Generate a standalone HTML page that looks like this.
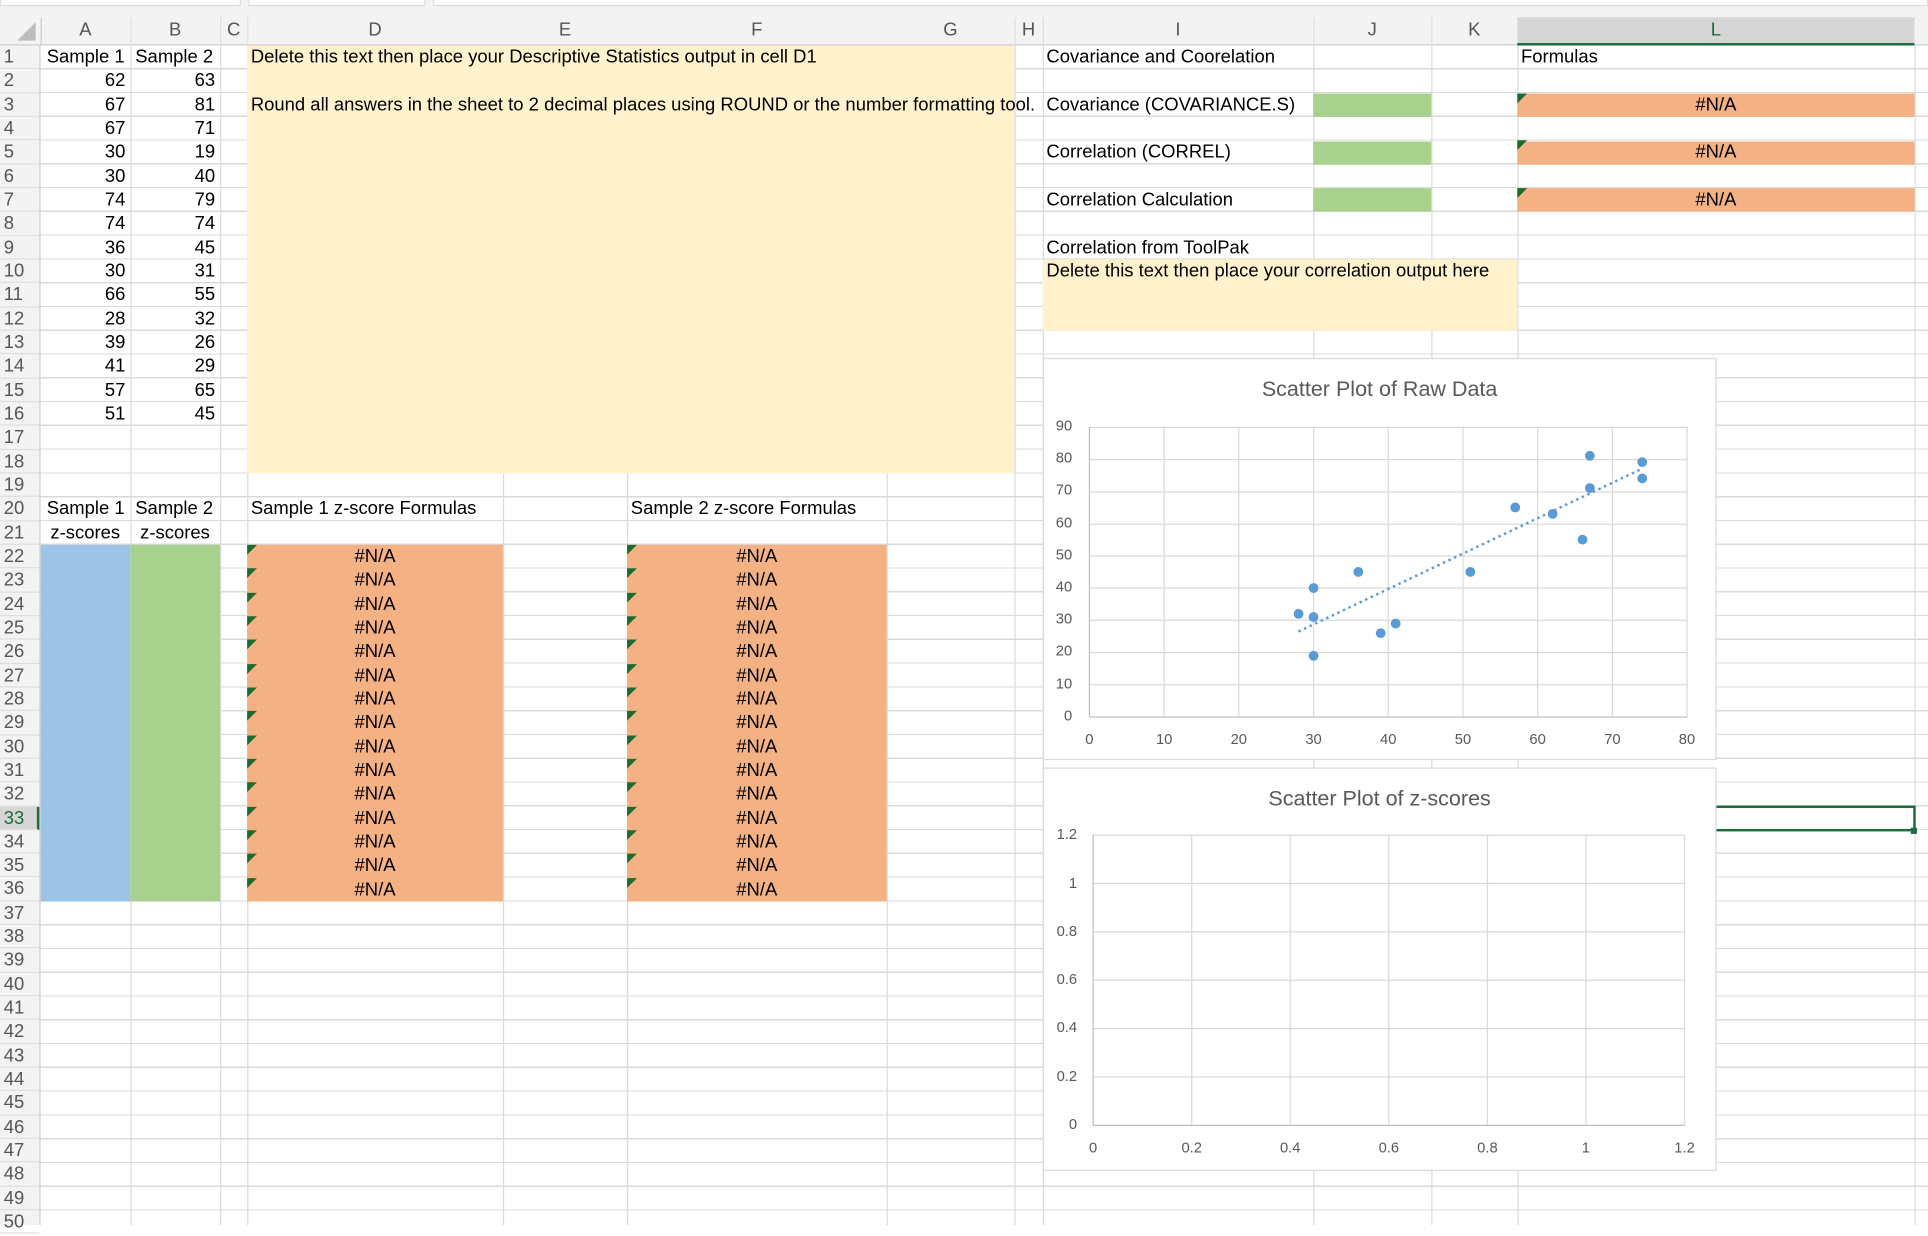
<!DOCTYPE html>
<html><head><meta charset="utf-8">
<style>
*{margin:0;padding:0;box-sizing:border-box}
html,body{width:1928px;height:1225px;overflow:hidden;background:#fff}
#w{position:absolute;left:0;top:0;width:1568px;height:996px;transform:scale(1.22959,1.22992);transform-origin:0 0;font-family:"Liberation Sans",Arial,sans-serif;font-size:15px;color:#000}
.a{position:absolute}
.grid{left:33px;top:37px;width:1535px;height:959px;background:repeating-linear-gradient(to bottom,transparent 0,transparent 18.33px,#dadada 18.33px,#dadada 19.333px)}
.vl{position:absolute;top:14px;width:1px;height:982px;background:#dadada}
.hdr{left:0;top:14px;width:1568px;height:23px;background:#f3f3f3;border-bottom:1px solid #cfcfcf}
.hc{position:absolute;top:14px;height:23px;line-height:22px;text-align:center;color:#555;font-size:15px}
.rn{position:absolute;left:0;top:37px;width:33px;background:#f3f3f3;border-right:1px solid #cfcfcf;height:959px}
.rn div{height:19.333px;line-height:20.5px;padding-left:3px;color:#555;font-size:15px;border-bottom:1px solid #dedede}
.col div{height:19.333px;line-height:20.5px}
.r{text-align:right;padding-right:4px}
.na div{height:19.333px;line-height:20.5px;text-align:center;position:relative}
.na div:before{content:"";position:absolute;left:0;top:0;border-top:8px solid #1e6b2e;border-right:8px solid transparent}
.t{position:absolute;height:19.333px;line-height:20.5px;white-space:nowrap}
</style></head><body><div id="w">
<div class="a" style="left:0;top:0;width:1568px;height:14px;background:#f3f3f3"></div>
<div class="a" style="left:0;top:-4px;width:196px;height:9px;background:#fff;border:1px solid #ddd"></div>
<div class="a" style="left:202px;top:-4px;width:144px;height:9px;background:#fff;border:1px solid #ddd"></div>
<div class="a" style="left:352px;top:-4px;width:1216px;height:9px;background:#fff;border:1px solid #ddd"></div>

<div class="a grid"></div>

<!-- vertical lines -->
<div class="vl" style="left:106px"></div><div class="vl" style="left:179px"></div><div class="vl" style="left:201px"></div>
<div class="vl" style="left:409px;top:385px;height:611px"></div><div class="vl" style="left:510px;top:385px;height:611px"></div>
<div class="vl" style="left:721px;top:385px;height:611px"></div><div class="vl" style="left:825px"></div><div class="vl" style="left:848px"></div>
<div class="vl" style="left:1068px"></div><div class="vl" style="left:1164px"></div><div class="vl" style="left:1234px"></div><div class="vl" style="left:1557px"></div>
<div class="vl" style="left:409px;top:14px;height:23px"></div><div class="vl" style="left:510px;top:14px;height:23px"></div><div class="vl" style="left:721px;top:14px;height:23px"></div>

<!-- fills -->
<div class="a" style="left:201px;top:37px;width:624px;height:348px;background:#fff2cc"></div>
<div class="a" style="left:848px;top:211px;width:386px;height:58px;background:#fff2cc"></div>
<div class="a" style="left:1068px;top:76px;width:96px;height:19px;background:#a9d18e"></div>
<div class="a" style="left:1068px;top:115px;width:96px;height:19px;background:#a9d18e"></div>
<div class="a" style="left:1068px;top:153px;width:96px;height:19px;background:#a9d18e"></div>
<div class="a" style="left:33px;top:443px;width:73px;height:290px;background:#9dc3e6"></div>
<div class="a" style="left:106px;top:443px;width:73px;height:290px;background:#a9d18e"></div>
<div class="a" style="left:201px;top:443px;width:208px;height:290px;background:#f4b183"></div>
<div class="a" style="left:510px;top:443px;width:211px;height:290px;background:#f4b183"></div>
<div class="a" style="left:1234px;top:76px;width:323px;height:19px;background:#f4b183"></div>
<div class="a" style="left:1234px;top:115px;width:323px;height:19px;background:#f4b183"></div>
<div class="a" style="left:1234px;top:153px;width:323px;height:19px;background:#f4b183"></div>

<!-- header -->
<div class="a hdr"></div>
<div class="a" style="left:1234px;top:14px;width:323px;height:23px;background:#d6d6d6;border-bottom:2px solid #1e6b3c"></div>
<div class="a" style="left:14px;top:18px;width:0;height:0;border-bottom:15px solid #bdbdbd;border-left:15px solid transparent"></div>
<div class="hc" style="left:33px;width:73px">A</div><div class="hc" style="left:106px;width:73px">B</div><div class="hc" style="left:179px;width:22px">C</div>
<div class="hc" style="left:201px;width:208px">D</div><div class="hc" style="left:409px;width:101px">E</div><div class="hc" style="left:510px;width:211px">F</div>
<div class="hc" style="left:721px;width:104px">G</div><div class="hc" style="left:825px;width:23px">H</div><div class="hc" style="left:848px;width:220px">I</div>
<div class="hc" style="left:1068px;width:96px">J</div><div class="hc" style="left:1164px;width:70px">K</div><div class="hc" style="left:1234px;width:323px;color:#1e6b3c">L</div>
<div class="vl" style="left:33px;top:14px;height:23px;background:#cfcfcf"></div>
<div class="vl" style="left:106px;top:14px;height:23px;background:#e0e0e0"></div><div class="vl" style="left:179px;top:14px;height:23px;background:#e0e0e0"></div>
<div class="vl" style="left:201px;top:14px;height:23px;background:#e0e0e0"></div><div class="vl" style="left:825px;top:14px;height:23px;background:#e0e0e0"></div>
<div class="vl" style="left:848px;top:14px;height:23px;background:#e0e0e0"></div><div class="vl" style="left:1068px;top:14px;height:23px;background:#e0e0e0"></div>
<div class="vl" style="left:1164px;top:14px;height:23px;background:#e0e0e0"></div>

<div class="rn"><div>1</div><div>2</div><div>3</div><div>4</div><div>5</div><div>6</div><div>7</div><div>8</div><div>9</div><div>10</div><div>11</div><div>12</div><div>13</div><div>14</div><div>15</div><div>16</div><div>17</div><div>18</div><div>19</div><div>20</div><div>21</div><div>22</div><div>23</div><div>24</div><div>25</div><div>26</div><div>27</div><div>28</div><div>29</div><div>30</div><div>31</div><div>32</div><div style="background:#d6d6d6;color:#1e6b3c;border-right:2px solid #1e6b3c">33</div><div>34</div><div>35</div><div>36</div><div>37</div><div>38</div><div>39</div><div>40</div><div>41</div><div>42</div><div>43</div><div>44</div><div>45</div><div>46</div><div>47</div><div>48</div><div>49</div><div>50</div></div>

<div class="t" style="left:38px;top:37px">Sample 1</div><div class="t" style="left:110px;top:37px">Sample 2</div>
<div class="a col r" style="left:33px;top:56.3px;width:73px"><div>62</div><div>67</div><div>67</div><div>30</div><div>30</div><div>74</div><div>74</div><div>36</div><div>30</div><div>66</div><div>28</div><div>39</div><div>41</div><div>57</div><div>51</div></div>
<div class="a col r" style="left:106px;top:56.3px;width:73px"><div>63</div><div>81</div><div>71</div><div>19</div><div>40</div><div>79</div><div>74</div><div>45</div><div>31</div><div>55</div><div>32</div><div>26</div><div>29</div><div>65</div><div>45</div></div>

<div class="t" style="left:204px;top:37px">Delete this text then place your Descriptive Statistics output in cell D1</div>
<div class="t" style="left:204px;top:75.7px">Round all answers in the sheet to 2 decimal places using ROUND or the number formatting tool.</div>

<div class="t" style="left:851px;top:37px">Covariance and Coorelation</div>
<div class="t" style="left:851px;top:75.7px">Covariance (COVARIANCE.S)</div>
<div class="t" style="left:851px;top:114.3px">Correlation (CORREL)</div>
<div class="t" style="left:851px;top:153px">Correlation Calculation</div>
<div class="t" style="left:851px;top:191.7px">Correlation from ToolPak</div>
<div class="t" style="left:851px;top:211px">Delete this text then place your correlation output here</div>
<div class="t" style="left:1237px;top:37px">Formulas</div>
<div class="a na" style="left:1234px;top:75.7px;width:323px"><div>#N/A</div></div>
<div class="a na" style="left:1234px;top:114.3px;width:323px"><div>#N/A</div></div>
<div class="a na" style="left:1234px;top:153px;width:323px"><div>#N/A</div></div>

<div class="t" style="left:38px;top:404.3px">Sample 1</div><div class="t" style="left:110px;top:404.3px">Sample 2</div>
<div class="t" style="left:41px;top:423.7px">z-scores</div><div class="t" style="left:114px;top:423.7px">z-scores</div>
<div class="t" style="left:204px;top:404.3px">Sample 1 z-score Formulas</div>
<div class="t" style="left:513px;top:404.3px">Sample 2 z-score Formulas</div>
<div class="a na" style="left:201px;top:443px;width:208px"><div>#N/A</div><div>#N/A</div><div>#N/A</div><div>#N/A</div><div>#N/A</div><div>#N/A</div><div>#N/A</div><div>#N/A</div><div>#N/A</div><div>#N/A</div><div>#N/A</div><div>#N/A</div><div>#N/A</div><div>#N/A</div><div>#N/A</div></div>
<div class="a na" style="left:510px;top:443px;width:211px"><div>#N/A</div><div>#N/A</div><div>#N/A</div><div>#N/A</div><div>#N/A</div><div>#N/A</div><div>#N/A</div><div>#N/A</div><div>#N/A</div><div>#N/A</div><div>#N/A</div><div>#N/A</div><div>#N/A</div><div>#N/A</div><div>#N/A</div></div>

<div class="a" style="left:1233px;top:655px;width:325px;height:21px;border:2px solid #1e6b3c"></div>
<div class="a" style="left:1554px;top:673px;width:5px;height:5px;background:#1e6b3c"></div>

<svg class="a" style="left:0;top:0" width="1568" height="996" font-family="Liberation Sans, sans-serif">
<rect x="848.5" y="291.5" width="547" height="326" fill="#fff" stroke="#d9d9d9"/>
<text x="1122" y="322" text-anchor="middle" font-size="17.5" fill="#595959">Scatter Plot of Raw Data</text>
<g stroke="#d9d9d9" stroke-width="1">
<line x1="886" y1="347.5" x2="1372" y2="347.5"/><line x1="886" y1="373.7" x2="1372" y2="373.7"/><line x1="886" y1="400" x2="1372" y2="400"/><line x1="886" y1="426.2" x2="1372" y2="426.2"/><line x1="886" y1="452.1" x2="1372" y2="452.1"/><line x1="886" y1="478.1" x2="1372" y2="478.1"/><line x1="886" y1="504.3" x2="1372" y2="504.3"/><line x1="886" y1="530.6" x2="1372" y2="530.6"/><line x1="886" y1="556.8" x2="1372" y2="556.8"/>
<line x1="946.8" y1="347" x2="946.8" y2="583"/><line x1="1007.5" y1="347" x2="1007.5" y2="583"/><line x1="1068.3" y1="347" x2="1068.3" y2="583"/><line x1="1129" y1="347" x2="1129" y2="583"/><line x1="1189.8" y1="347" x2="1189.8" y2="583"/><line x1="1250.5" y1="347" x2="1250.5" y2="583"/><line x1="1311.3" y1="347" x2="1311.3" y2="583"/><line x1="1372" y1="347" x2="1372" y2="583"/>
<line x1="886" y1="347" x2="886" y2="583" stroke="#bfbfbf"/><line x1="886" y1="583" x2="1372" y2="583" stroke="#bfbfbf"/>
</g>
<g font-size="12" fill="#595959" text-anchor="end">
<text x="872" y="350">90</text><text x="872" y="376">80</text><text x="872" y="402">70</text><text x="872" y="429">60</text><text x="872" y="455">50</text><text x="872" y="481">40</text><text x="872" y="507">30</text><text x="872" y="533">20</text><text x="872" y="560">10</text><text x="872" y="586">0</text>
</g>
<g font-size="12" fill="#595959" text-anchor="middle">
<text x="886" y="605">0</text><text x="946.8" y="605">10</text><text x="1007.5" y="605">20</text><text x="1068.3" y="605">30</text><text x="1129" y="605">40</text><text x="1189.8" y="605">50</text><text x="1250.5" y="605">60</text><text x="1311.3" y="605">70</text><text x="1372" y="605">80</text>
</g>
<line x1="1056" y1="513.5" x2="1335.6" y2="381" stroke="#5b9bd5" stroke-width="2" stroke-dasharray="2,3"/>
<g fill="#5b9bd5">
<circle cx="1262.7" cy="417.8" r="4"/><circle cx="1293" cy="370.6" r="4"/><circle cx="1293" cy="396.8" r="4"/><circle cx="1068.3" cy="533.2" r="4"/><circle cx="1068.3" cy="478.1" r="4"/><circle cx="1335.6" cy="375.8" r="4"/><circle cx="1335.6" cy="389" r="4"/><circle cx="1104.7" cy="465" r="4"/><circle cx="1068.3" cy="501.7" r="4"/><circle cx="1287" cy="438.8" r="4"/><circle cx="1056.1" cy="499.1" r="4"/><circle cx="1122.9" cy="514.8" r="4"/><circle cx="1135.1" cy="507" r="4"/><circle cx="1232.3" cy="412.6" r="4"/><circle cx="1195.8" cy="465" r="4"/>
</g>

<rect x="848.5" y="624.5" width="547" height="327" fill="#fff" stroke="#d9d9d9"/>
<text x="1122" y="655" text-anchor="middle" font-size="17.5" fill="#595959">Scatter Plot of z-scores</text>
<g stroke="#d9d9d9" stroke-width="1">
<line x1="889" y1="679" x2="1370" y2="679"/><line x1="889" y1="718.3" x2="1370" y2="718.3"/><line x1="889" y1="757.7" x2="1370" y2="757.7"/><line x1="889" y1="797" x2="1370" y2="797"/><line x1="889" y1="836.3" x2="1370" y2="836.3"/><line x1="889" y1="875.7" x2="1370" y2="875.7"/>
<line x1="969.2" y1="679" x2="969.2" y2="915"/><line x1="1049.3" y1="679" x2="1049.3" y2="915"/><line x1="1129.5" y1="679" x2="1129.5" y2="915"/><line x1="1209.7" y1="679" x2="1209.7" y2="915"/><line x1="1289.8" y1="679" x2="1289.8" y2="915"/><line x1="1370" y1="679" x2="1370" y2="915"/>
<line x1="889" y1="679" x2="889" y2="915" stroke="#bfbfbf"/><line x1="889" y1="915" x2="1370" y2="915" stroke="#bfbfbf"/>
</g>
<g font-size="12" fill="#595959" text-anchor="end">
<text x="876" y="682">1.2</text><text x="876" y="722">1</text><text x="876" y="761">0.8</text><text x="876" y="800">0.6</text><text x="876" y="839">0.4</text><text x="876" y="879">0.2</text><text x="876" y="918">0</text>
</g>
<g font-size="12" fill="#595959" text-anchor="middle">
<text x="889" y="937">0</text><text x="969.2" y="937">0.2</text><text x="1049.3" y="937">0.4</text><text x="1129.5" y="937">0.6</text><text x="1209.7" y="937">0.8</text><text x="1289.8" y="937">1</text><text x="1370" y="937">1.2</text>
</g>
</svg>
</div></body></html>
